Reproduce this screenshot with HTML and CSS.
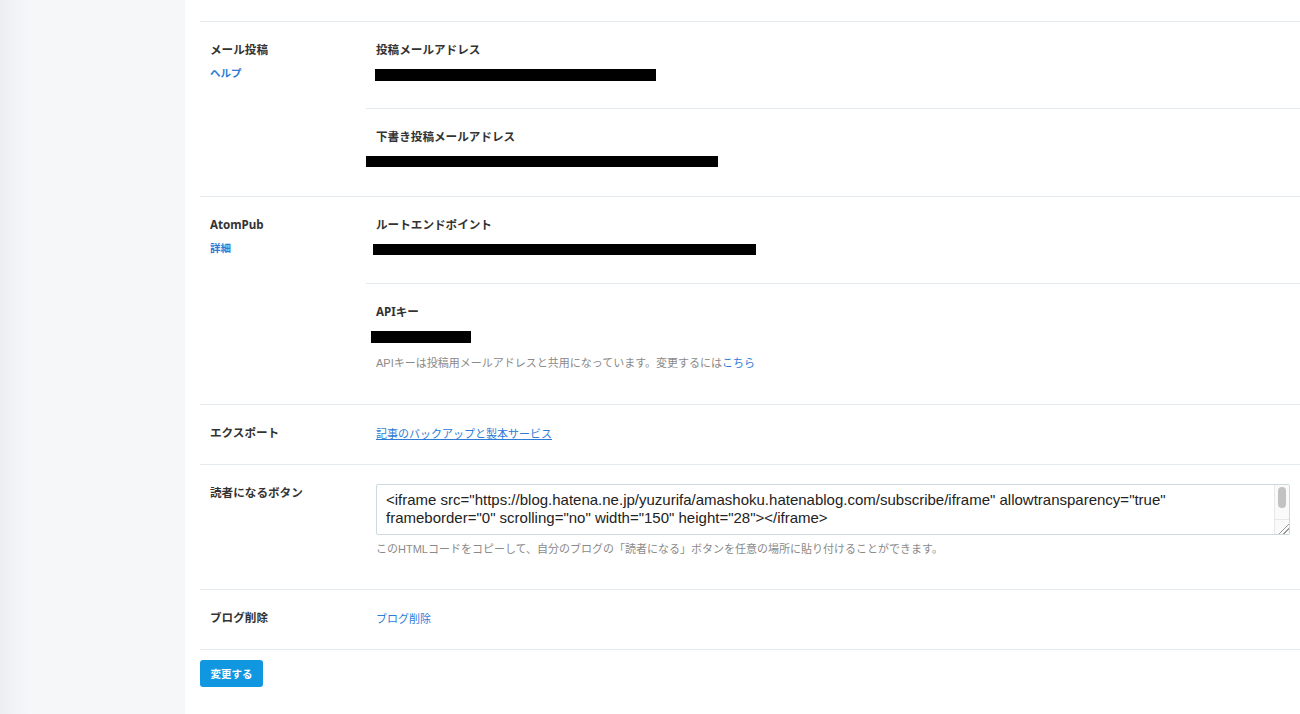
FILE: index.html
```html
<!DOCTYPE html>
<html lang="ja">

<head>
    <meta charset="UTF-8">
    <meta name="viewport" content="width=device-width, initial-scale=1.0">
    <title>詳細設定</title>
    <link rel="stylesheet" href="styles.css">
</head>

<body>
    <div class="layout">
        <aside class="sidebar"></aside>

        <main class="main">
            <form class="settings">
                <div class="row">
                    <div class="row-label">
                        <div class="label">メール投稿</div>
                        <a class="label-link" href="#">ヘルプ</a>
                    </div>
                    <div class="row-body">
                        <div class="sub">
                            <div class="sub-title">投稿メールアドレス</div>
                            <div class="value"><span class="redacted redacted-1"></span></div>
                        </div>
                        <div class="sub">
                            <div class="sub-title">下書き投稿メールアドレス</div>
                            <div class="value"><span class="redacted redacted-2"></span></div>
                        </div>
                    </div>
                </div>

                <div class="row">
                    <div class="row-label">
                        <div class="label">AtomPub</div>
                        <a class="label-link" href="#">詳細</a>
                    </div>
                    <div class="row-body">
                        <div class="sub">
                            <div class="sub-title">ルートエンドポイント</div>
                            <div class="value"><span class="redacted redacted-3"></span></div>
                        </div>
                        <div class="sub">
                            <div class="sub-title">APIキー</div>
                            <div class="value"><span class="redacted redacted-4"></span></div>
                            <p class="help">APIキーは投稿用メールアドレスと共用になっています。変更するには<a href="#">こちら</a></p>
                        </div>
                    </div>
                </div>

                <div class="row">
                    <div class="row-label">
                        <div class="label">エクスポート</div>
                    </div>
                    <div class="row-body">
                        <div class="sub">
                            <a class="link underline" href="#">記事のバックアップと製本サービス</a>
                        </div>
                    </div>
                </div>

                <div class="row">
                    <div class="row-label">
                        <div class="label">読者になるボタン</div>
                    </div>
                    <div class="row-body">
                        <div class="sub">
                            <div class="code-wrap">
                                <textarea class="code" readonly>&lt;iframe src="https://blog.hatena.ne.jp/yuzurifa/amashoku.hatenablog.com/subscribe/iframe" allowtransparency="true" frameborder="0" scrolling="no" width="150" height="28"&gt;&lt;/iframe&gt;</textarea>
                                <span class="code-scroll"><span class="code-thumb"></span></span>
                            </div>
                            <p class="help">このHTMLコードをコピーして、自分のブログの「読者になる」ボタンを任意の場所に貼り付けることができます。</p>
                        </div>
                    </div>
                </div>

                <div class="row">
                    <div class="row-label">
                        <div class="label">ブログ削除</div>
                    </div>
                    <div class="row-body">
                        <div class="sub">
                            <a class="link" href="#">ブログ削除</a>
                        </div>
                    </div>
                </div>

                <button type="button" class="btn-submit">変更する</button>
            </form>
        </main>
    </div>
</body>

</html>
```

FILE: styles.css
```css
* {
    margin: 0;
    padding: 0;
    box-sizing: border-box;
}

body {
    font-family: "Liberation Sans", "Noto Sans CJK JP", sans-serif;
    color: #333;
    background: #fff;
}

a {
    color: #2e7bd6;
    text-decoration: none;
}

.layout {
    display: flex;
    min-height: 100vh;
}

.sidebar {
    width: 185px;
    flex-shrink: 0;
    background: linear-gradient(90deg, #eceef1 0, #f6f7f9 30px);
}

.main {
    flex: 1;
    padding: 21px 0 0 15px;
}

.row {
    display: flex;
    border-top: 1px solid #e4eaed;
}

.row:last-of-type {
    border-bottom: 1px solid #e4eaed;
}

.row-label {
    width: 166px;
    flex-shrink: 0;
    padding: 19px 10px 21px;
}

.label,
.sub-title {
    font-family: "Noto Sans", "Noto Sans CJK JP", sans-serif;
    font-size: 11.6px;
    font-weight: bold;
    line-height: 18px;
}

.label-link {
    display: block;
    margin-top: 6px;
    font-size: 10.5px;
    font-weight: bold;
    line-height: 16px;
}

.row-body {
    flex: 1;
}

.sub {
    padding: 19px 10px 21px;
}

.sub + .sub {
    border-top: 1px solid #e4eaed;
    padding-bottom: 22px;
}

.sub-title {
    margin-bottom: 10px;
}

.value {
    height: 18px;
}

.redacted {
    display: block;
    background: #000;
}

.redacted-1 {
    width: 281px;
    height: 12px;
    margin: 3px 0 0 -1px;
}

.redacted-2 {
    width: 352px;
    height: 11px;
    margin: 4px 0 0 -10px;
}

.redacted-3 {
    width: 383px;
    height: 11px;
    margin: 4px 0 0 -3px;
}

.redacted-4 {
    width: 100px;
    height: 12px;
    margin: 3px 0 0 -5px;
}

.help {
    font-size: 11px;
    line-height: 16px;
    color: #8a8a8a;
    margin: 6px 0 11px;
}

.link {
    display: inline-block;
    font-size: 11px;
    line-height: 18px;
}

.link.underline {
    text-decoration: underline;
}

.code-wrap {
    position: relative;
}

.code {
    display: block;
    width: 100%;
    height: 51px;
    padding: 6px 60px 6px 9px;
    border: 1px solid #cddadd;
    border-radius: 2px;
    font-family: "Liberation Sans", sans-serif;
    font-size: 15px;
    line-height: 18px;
    color: #222;
    resize: vertical;
    overflow: hidden;
    outline: none;
}

.code::-webkit-resizer {
    background:
        linear-gradient(135deg, transparent 0 62%, #9a9a9a 62% 67%, transparent 67% 78%, #9a9a9a 78% 83%, transparent 83%),
        #fafafa;
    border-top: 1px solid #e8e8e8;
    border-left: 1px solid #e8e8e8;
}

/* fake vertical scrollbar over the textarea */
.code-scroll {
    position: absolute;
    top: 1px;
    right: 1px;
    width: 15px;
    height: 34px;
    background: #fafafa;
    border-left: 1px solid #e8e8e8;
    padding: 2px 3px 0 3px;
    pointer-events: none;
}

.code-thumb {
    display: block;
    height: 21px;
    border-radius: 4px;
    background: #c2c2c2;
}

.btn-submit {
    display: block;
    margin-top: 10px;
    width: 63px;
    height: 27px;
    border: none;
    border-radius: 3px;
    background: #1196e0;
    color: #fff;
    font-family: "Liberation Sans", "Noto Sans CJK JP", sans-serif;
    font-size: 10.5px;
    font-weight: bold;
}
```
